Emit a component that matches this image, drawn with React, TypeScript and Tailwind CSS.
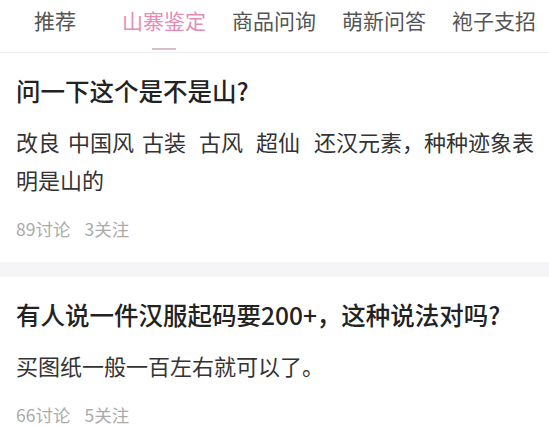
import React from "react";

const FONT = { fontFamily: '"Noto Sans CJK SC", "Noto Sans", sans-serif' };

function Tabs() {
  const tabs = ["推荐", "山寨鉴定", "商品问询", "萌新问答", "袍子支招"];
  return (
    <div className="h-[53px] border-b border-[#eeeeee] flex pl-[34px] gap-[26px]">
      {tabs.map((t, i) => (
        <div key={t} className={`flex flex-col items-center ${i === 0 ? "mr-[20px]" : ""}`}>
          <span
            className={`text-[21px] leading-[40px] ${i === 1 ? "text-[#e58bb5]" : "text-[#555555]"}`}
          >
            {t}
          </span>
          {i === 1 && <div className="mt-[8px] h-[2px] w-[24px] bg-[#d9bccb]" />}
        </div>
      ))}
    </div>
  );
}

function Meta({ a, b }: { a: string; b: string }) {
  return (
    <div className="mt-[19px] flex text-[17.5px] leading-[24px] text-[#aaaaaa]">
      <span className="mr-[14px]">{a}讨论</span>
      <span>{b}关注</span>
    </div>
  );
}

export default function App() {
  return (
    <div className="w-[549px] h-[426px] bg-white overflow-hidden" style={FONT}>
      <Tabs />
      <div className="pt-[21px] pb-[21px] pl-[16px] pr-3">
        <div className="text-[24.5px] leading-[34px] font-medium text-[#222222]">问一下这个是不是山?</div>
        <div className="mt-[14px] text-[22px] leading-[38px] text-[#333333]">
          <span className="inline-block mr-[8px]">改良</span>
          <span className="inline-block mr-[8px]">中国风</span>
          <span className="inline-block mr-[13px]">古装</span>
          <span className="inline-block mr-[13px]">古风</span>
          <span className="inline-block mr-[14px]">超仙</span>
          还汉元素，种种迹象表明是山的
        </div>
        <Meta a="89" b="3" />
      </div>
      <div className="h-[15px] bg-[#f5f5f7]" />
      <div className="pt-[21px] pb-[21px] pl-[16px] pr-3">
        <div className="text-[24.5px] leading-[34px] font-medium text-[#222222]">有人说一件汉服起码要200+，这种说法对吗?</div>
        <div className="mt-[14px] text-[22px] leading-[38px] text-[#333333]">买图纸一般一百左右就可以了。</div>
        <Meta a="66" b="5" />
      </div>
    </div>
  );
}
